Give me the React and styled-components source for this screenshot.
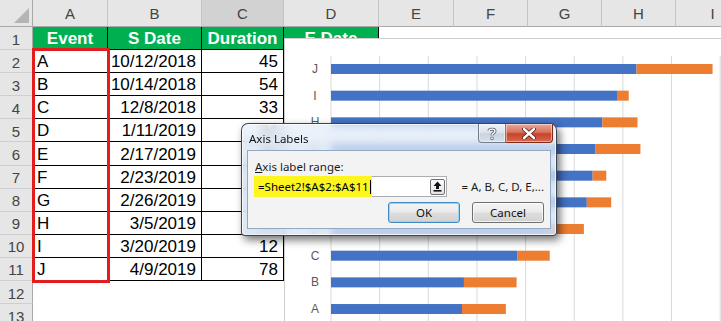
import React from "react";
import styled, { createGlobalStyle } from "styled-components";

const GlobalStyle = createGlobalStyle`
  html, body {
    margin: 0;
    padding: 0;
    background: #ffffff;
  }
  body {
    font-family: "Liberation Sans", Arial, sans-serif;
  }
`;

const COLS = ["A", "B", "C", "D", "E", "F", "G", "H", "I"];
const COL_WIDTHS = [75, 94, 82, 95, 75, 74, 74, 74, 74];
const ROW_COUNT = 13;

const TASKS = [
  { name: "A", date: "10/12/2018", dur: 45 },
  { name: "B", date: "10/14/2018", dur: 54 },
  { name: "C", date: "12/8/2018", dur: 33 },
  { name: "D", date: "1/11/2019", dur: 34 },
  { name: "E", date: "2/17/2019", dur: 25 },
  { name: "F", date: "2/23/2019", dur: 14 },
  { name: "G", date: "2/26/2019", dur: 46 },
  { name: "H", date: "3/5/2019", dur: 36 },
  { name: "I", date: "3/20/2019", dur: 12 },
  { name: "J", date: "4/9/2019", dur: 78 },
];

const HEADERS = ["Event", "S Date", "Duration", "E Date"];

const Page = styled.div`
  position: relative;
  width: 721px;
  height: 321px;
  overflow: hidden;
  background: #ffffff;
`;

const Sheet = styled.div`
  display: grid;
  grid-template-columns: 33px ${COL_WIDTHS.map((w) => `${w}px`).join(" ")};
  grid-template-rows: 27px repeat(${ROW_COUNT}, 23.1px);
`;

const Corner = styled.div`
  grid-row: 1;
  grid-column: 1;
  background: #e6e6e6;
  border-right: 1px solid #a9a9a9;
  border-bottom: 1px solid #a9a9a9;
  box-sizing: border-box;
  position: relative;

  &::after {
    content: "";
    position: absolute;
    right: 3px;
    bottom: 3px;
    width: 0;
    height: 0;
    border-left: 15px solid transparent;
    border-bottom: 15px solid #b4b4b4;
  }
`;

const ColHead = styled.div`
  grid-row: 1;
  grid-column: ${(p) => p.$col};
  display: flex;
  align-items: center;
  justify-content: center;
  box-sizing: border-box;
  background: ${(p) => (p.$selected ? "#d2d2d2" : "#e6e6e6")};
  border-right: 1px solid #c4c4c4;
  border-bottom: 1px solid #a9a9a9;
  color: #444444;
  font-size: 15px;
  padding-top: 1px;
`;

const RowHead = styled.div`
  grid-row: ${(p) => p.$row};
  grid-column: 1;
  display: flex;
  align-items: center;
  justify-content: center;
  box-sizing: border-box;
  background: #e6e6e6;
  border-right: 1px solid #a9a9a9;
  border-bottom: 1px solid #cfcfcf;
  color: #444444;
  font-size: 15px;
  padding-top: 2px;
`;

const Cell = styled.div`
  grid-row: ${(p) => p.$row};
  grid-column: ${(p) => p.$col};
  display: flex;
  align-items: ${(p) => (p.$head ? "center" : "flex-end")};
  justify-content: ${(p) =>
    p.$align === "right" ? "flex-end" : p.$align === "center" ? "center" : "flex-start"};
  box-sizing: border-box;
  padding: ${(p) => (p.$head ? "0 2px" : "0 5px 1px 4px")};
  background: ${(p) => (p.$head ? "#00b050" : "#ffffff")};
  color: ${(p) => (p.$head ? "#ffffff" : "#000000")};
  font-weight: ${(p) => (p.$head ? 700 : 400)};
  font-size: 17px;
  line-height: 19px;
  border-right: 1px solid ${(p) => (p.$boxed ? "#000000" : "transparent")};
  border-bottom: 1px solid ${(p) => (p.$boxed ? "#000000" : "transparent")};
  white-space: nowrap;
  overflow: hidden;
`;

const Selection = styled.div`
  grid-column: 2;
  grid-row: 3 / 13;
  margin: -2px -2px -2px -1px;
  border: 3px solid #e11d1d;
  pointer-events: none;
  z-index: 1;
`;

const Chart = styled.div`
  position: absolute;
  left: 284px;
  top: 38px;
  width: 460px;
  height: 300px;
  background: #ffffff;
  border: 1px solid #cfcfcf;
  z-index: 2;
`;

const Dialog = styled.div`
  position: absolute;
  left: 241px;
  top: 123px;
  width: 316px;
  height: 113px;
  box-sizing: border-box;
  display: flex;
  flex-direction: column;
  padding: 0 5px 6px 5px;
  border: 1px solid rgba(40, 52, 70, 0.9);
  border-radius: 7px 7px 4px 4px;
  background: linear-gradient(
    180deg,
    rgba(232, 240, 249, 0.78) 0%,
    rgba(206, 222, 240, 0.72) 40%,
    rgba(214, 228, 244, 0.78) 100%
  );
  backdrop-filter: blur(4px);
  box-shadow: 3px 4px 9px rgba(0, 0, 0, 0.55), inset 0 0 0 1px rgba(255, 255, 255, 0.7);
  z-index: 5;
  font-family: "Noto Sans", "Open Sans", sans-serif;
`;

const TitleBar = styled.div`
  height: 26px;
  display: flex;
  align-items: flex-start;
  justify-content: space-between;
`;

const Title = styled.div`
  font-size: 11.5px;
  color: #111111;
  padding: 7px 0 0 2px;
`;

const Caption = styled.div`
  display: flex;
  margin-right: -2px;
`;

const CaptionButton = styled.div`
  width: ${(p) => (p.$close ? 47 : 28)}px;
  height: 19px;
  box-sizing: border-box;
  display: flex;
  align-items: center;
  justify-content: center;
  border: 1px solid ${(p) => (p.$close ? "#7e2a1c" : "#6f7c8e")};
  border-top: none;
  border-left-width: ${(p) => (p.$close ? 0 : 1)}px;
  border-radius: ${(p) => (p.$close ? "0 0 4px 0" : "0 0 0 4px")};
  background: ${(p) =>
    p.$close
      ? "linear-gradient(180deg, #e9a99b 0%, #d9735e 45%, #c6442b 55%, #d6694e 100%)"
      : "linear-gradient(180deg, #eef2f7 0%, #dde4ec 45%, #c9d3df 55%, #d8e0ea 100%)"};
  box-shadow: inset 0 0 0 1px rgba(255, 255, 255, 0.45);
`;

const Client = styled.div`
  flex: 1;
  background: #f3f3f3;
  border: 1px solid #94a8c0;
  padding: 9px 6px 0 6px;
  display: flex;
  flex-direction: column;
  font-size: 11.5px;
  color: #1a1a1a;
`;

const FieldLabel = styled.div`
  line-height: 14px;
  padding-left: 1px;
  & u {
    text-decoration: underline;
  }
`;

const FieldRow = styled.div`
  margin-top: 2px;
  display: flex;
  align-items: center;
  gap: 15px;
`;

const Input = styled.div`
  width: 195px;
  height: 21px;
  box-sizing: border-box;
  border: 1px solid #abadb3;
  background: #ffffff;
  display: flex;
  align-items: center;
  justify-content: space-between;
  padding-right: 1px;
`;

const Highlight = styled.span`
  align-self: stretch;
  margin: -1px 0 -1px -1px;
  width: 118px;
  display: flex;
  align-items: center;
  padding-left: 4px;
  box-sizing: border-box;
  background: #fff51e;
  color: #000000;
  white-space: nowrap;
`;

const Caret = styled.span`
  display: inline-block;
  width: 1px;
  height: 14px;
  margin-left: 1px;
  background: #000000;
`;

const CollapseButton = styled.div`
  width: 15px;
  height: 16px;
  box-sizing: border-box;
  border: 1px solid #707070;
  border-radius: 2px;
  background: linear-gradient(180deg, #fbfbfb, #e3e3e3);
  display: flex;
  align-items: center;
  justify-content: center;
`;

const Preview = styled.div`
  white-space: nowrap;
  color: #1a1a1a;
`;

const ButtonRow = styled.div`
  margin-top: 5px;
  display: flex;
  justify-content: flex-end;
  gap: 12px;
`;

const Button = styled.div`
  width: 72px;
  height: 21px;
  box-sizing: border-box;
  display: flex;
  align-items: center;
  justify-content: center;
  border: 1px solid ${(p) => (p.$default ? "#3c8bc7" : "#707070")};
  border-radius: 3px;
  background: linear-gradient(180deg, #f4f4f4 0%, #ebebeb 48%, #dddddd 52%, #d2d2d2 100%);
  box-shadow: ${(p) =>
    p.$default ? "inset 0 0 0 1px #9ad4f5" : "inset 0 0 0 1px rgba(255,255,255,0.7)"};
  color: #111111;
`;

const DAY = 86400000;
const toDay = (s) => {
  const [m, d, y] = s.split("/").map(Number);
  return Date.UTC(y, m - 1, d) / DAY;
};
const BASE = toDay("10/12/2018");
const PX = 0.975;

function GanttChart() {
  const gridX = Array.from({ length: 9 }, (_, i) => 46 + i * 48.65);
  const rows = [...TASKS].reverse();
  return (
    <svg width="460" height="300" style={{ display: "block" }}>
      {gridX.map((x) => (
        <line key={x} x1={x} x2={x} y1={17} y2={300} stroke="#d9d9d9" strokeWidth="1" />
      ))}
      {rows.map((t, i) => {
        const cy = 30 + i * 26.67;
        const blue = 131 + (toDay(t.date) - BASE) * PX;
        const orange = t.dur * PX;
        return (
          <g key={t.name}>
            <text
              x={30}
              y={cy + 4}
              textAnchor="middle"
              fontFamily="Liberation Sans, Arial, sans-serif"
              fontSize="12"
              fill="#595959"
            >
              {t.name}
            </text>
            <rect x={46} y={cy - 5} width={blue} height={10} fill="#4472c4" />
            <rect x={46 + blue} y={cy - 5} width={orange} height={10} fill="#ed7d31" />
          </g>
        );
      })}
    </svg>
  );
}

function UpArrowIcon() {
  return (
    <svg width="9" height="11" viewBox="0 0 9 11">
      <path d="M4.5 0.5 L8.5 5 L6 5 L6 8 L3 8 L3 5 L0.5 5 Z" fill="#111" />
      <rect x="0.5" y="9" width="8" height="1.6" fill="#111" />
    </svg>
  );
}

function CloseGlyph() {
  return (
    <svg width="14" height="11" viewBox="0 0 14 11">
      <path d="M2 1 L12 10 M12 1 L2 10" stroke="#5a1a10" strokeWidth="4" strokeLinecap="round" />
      <path d="M2 1 L12 10 M12 1 L2 10" stroke="#ffffff" strokeWidth="2.4" strokeLinecap="round" />
    </svg>
  );
}

function HelpGlyph() {
  return (
    <svg width="10" height="13" viewBox="0 0 10 13">
      <path d="M2 4 C2 1.5 8 1.5 8 4 C8 6 5 6 5 8.5" fill="none" stroke="#5d6877" strokeWidth="3" />
      <path d="M2 4 C2 1.5 8 1.5 8 4 C8 6 5 6 5 8.5" fill="none" stroke="#ffffff" strokeWidth="1.4" />
      <rect x="3.5" y="9.8" width="3" height="3" fill="#5d6877" />
      <rect x="4.2" y="10.5" width="1.6" height="1.6" fill="#ffffff" />
    </svg>
  );
}

function cellContent(row, colIdx) {
  if (row === 1) return HEADERS[colIdx] || "";
  const t = TASKS[row - 2];
  if (!t) return "";
  if (colIdx === 0) return t.name;
  if (colIdx === 1) return t.date;
  if (colIdx === 2) return String(t.dur);
  return "";
}

export default function App() {
  const rows = Array.from({ length: ROW_COUNT }, (_, i) => i + 1);
  return (
    <Page>
      <GlobalStyle />
      <Sheet>
        <Corner />
        {COLS.map((c, ci) => (
          <ColHead key={c} $col={ci + 2} $selected={c === "C"}>
            {c}
          </ColHead>
        ))}
        {rows.map((r) => (
          <React.Fragment key={r}>
            <RowHead $row={r + 1}>{r}</RowHead>
            {COLS.map((c, ci) => {
              const head = r === 1 && ci < 4;
              const boxed = (r <= 11 && ci < 3) || head;
              return (
                <Cell
                  key={c}
                  $row={r + 1}
                  $col={ci + 2}
                  $head={head}
                  $boxed={boxed}
                  $align={head ? "center" : ci === 0 ? "left" : "right"}
                >
                  {cellContent(r, ci)}
                </Cell>
              );
            })}
          </React.Fragment>
        ))}
        <Selection />
      </Sheet>

      <Chart>
        <GanttChart />
      </Chart>

      <Dialog>
        <TitleBar>
          <Title>Axis Labels</Title>
          <Caption>
            <CaptionButton>
              <HelpGlyph />
            </CaptionButton>
            <CaptionButton $close>
              <CloseGlyph />
            </CaptionButton>
          </Caption>
        </TitleBar>
        <Client>
          <FieldLabel>
            <u>A</u>xis label range:
          </FieldLabel>
          <FieldRow>
            <Input>
              <Highlight>
                =Sheet2!$A$2:$A$11
                <Caret />
              </Highlight>
              <CollapseButton>
                <UpArrowIcon />
              </CollapseButton>
            </Input>
            <Preview>= A, B, C, D, E,...</Preview>
          </FieldRow>
          <ButtonRow>
            <Button $default>OK</Button>
            <Button>Cancel</Button>
          </ButtonRow>
        </Client>
      </Dialog>
    </Page>
  );
}
